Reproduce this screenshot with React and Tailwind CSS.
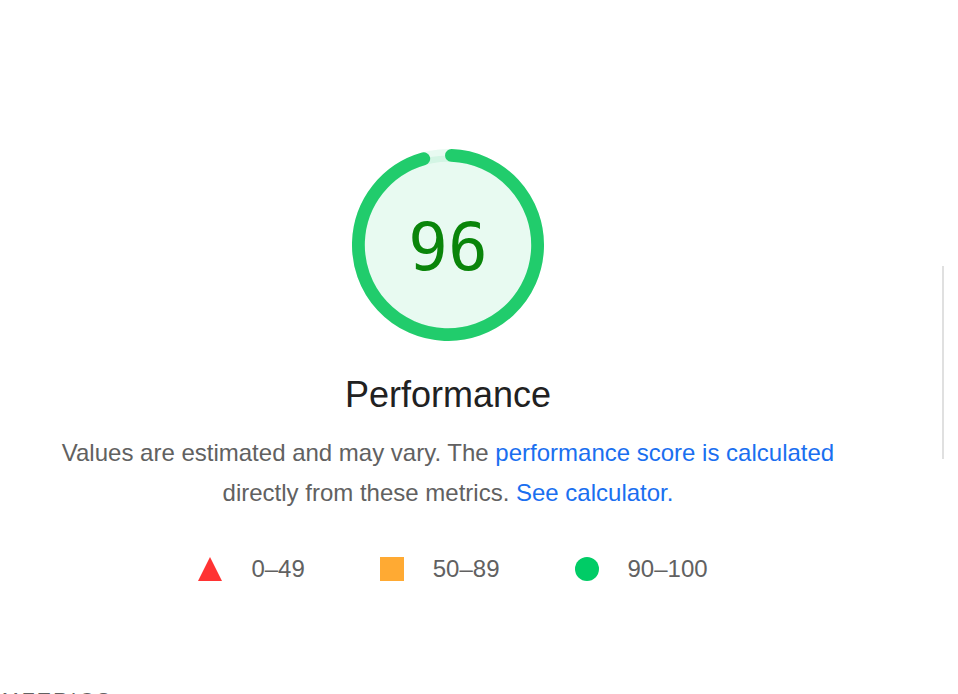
import React from "react";

const C = 2 * Math.PI * 89.6;

function Gauge({ score = 96 }) {
  return (
    <div className="relative mx-auto h-[192px] w-[192px]">
      <svg viewBox="0 0 192 192" className="h-[192px] w-[192px]">
        <circle
          cx="96"
          cy="96"
          r="89.6"
          fill="#00cc66"
          fillOpacity="0.09"
          stroke="#00cc66"
          strokeOpacity="0.09"
          strokeWidth="12.8"
        />
        <circle
          cx="96"
          cy="96"
          r="89.6"
          fill="none"
          stroke="#21cc6c"
          strokeWidth="12.8"
          strokeLinecap="round"
          strokeDasharray={`${(341.5 / 360) * C} ${C}`}
          transform="rotate(-87.8 96 96)"
        />
      </svg>
      <div className="absolute inset-0 flex items-center justify-center pt-[6px] font-['DejaVu_Sans_Mono',monospace] text-[66px] leading-none text-[#0a850a]">
        {score}
      </div>
    </div>
  );
}

function LegendItem({ icon, label }) {
  return (
    <div className="flex items-center gap-[29px]">
      {icon}
      <span className="text-[24px] leading-[24px] text-[#616161]">{label}</span>
    </div>
  );
}

export default function App() {
  return (
    <div className="h-[694px] overflow-hidden bg-white font-['Liberation_Sans',Arial,sans-serif]">
      <div className="flex">
        <main className="w-[896px] shrink-0 pt-[149px]">
          <Gauge score={96} />

          <h2 className="mt-[32px] text-center text-[36px] leading-[43px] text-[#212121]">
            Performance
          </h2>

          <p className="mx-auto mt-[17px] w-[820px] text-center text-[24px] leading-[40px] text-[#616161]">
            Values are estimated and may vary. The{" "}
            <a href="#" className="text-[#1a6ff0]">
              performance score is calculated
            </a>{" "}
            directly from these metrics.{" "}
            <a href="#" className="text-[#1a6ff0]">
              See calculator.
            </a>
          </p>

          <div className="mt-[44px] flex items-center justify-center gap-[75px] pl-[10px]">
            <LegendItem
              label="0–49"
              icon={
                <svg width="24" height="24" viewBox="0 0 24 24">
                  <polygon points="12,0 24,24 0,24" fill="#ff3333" />
                </svg>
              }
            />
            <LegendItem
              label="50–89"
              icon={<span className="block h-[24px] w-[24px] bg-[#ffaa33]" />}
            />
            <LegendItem
              label="90–100"
              icon={<span className="block h-[24px] w-[24px] rounded-full bg-[#00cc66]" />}
            />
          </div>

          <div className="mt-[107px] pl-[2px] text-[20px] font-medium uppercase leading-[24px] tracking-[3px] text-[#616161]">
            Metrics
          </div>
        </main>

        <div className="flex-1">
          <div className="ml-[46px] mt-[266px] h-[193px] w-[2px] bg-[#e0e0e0]" />
        </div>
      </div>
    </div>
  );
}
